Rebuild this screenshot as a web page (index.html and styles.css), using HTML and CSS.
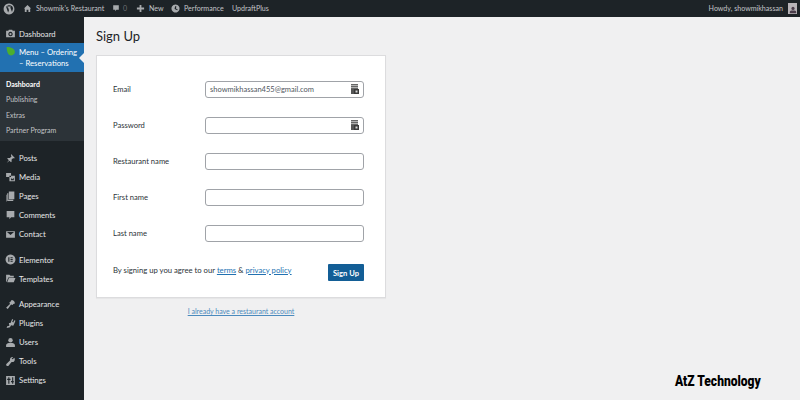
FILE: index.html
```html
<!DOCTYPE html>
<html lang="en">
<head>
<meta charset="utf-8">
<title>Sign Up</title>
<link rel="stylesheet" href="styles.css">
</head>
<body>
<svg width="0" height="0" class="defs">
  <symbol id="i-dash" viewBox="0 0 20 20"><path d="M2 5h4l1-2h6l1 2h4v12H2z M10 7a4 4 0 1 0 .01 0z" fill-rule="evenodd"/><circle cx="10" cy="11" r="2"/></symbol>
  <symbol id="i-pin" viewBox="0 0 20 20"><path d="M11 2l7 7-2 1-1-1-3 3 0 4-1 1-3-3-5 4 4-5-3-3 1-1 4 0 3-3-1-1z"/></symbol>
  <symbol id="i-media" viewBox="0 0 20 20"><path d="M2 2h9v7H2z M8 7h10v10H8z M11 11l2 2 3-2v4h-5z" fill-rule="evenodd"/></symbol>
  <symbol id="i-pages" viewBox="0 0 20 20"><path d="M7 1h10v14H7z M4 4h2v12h9v2H4z M2 7h1v12h9v0H2z"/></symbol>
  <symbol id="i-comment" viewBox="0 0 20 20"><path d="M3 2h14v11h-6l-3 4v-4H3z"/></symbol>
  <symbol id="i-mail" viewBox="0 0 20 20"><path d="M2 4h16v12H2z M4 6l6 5 6-5v-.5H4z" fill-rule="evenodd"/></symbol>
  <symbol id="i-el" viewBox="0 0 20 20"><path d="M10 1a9 9 0 1 0 .01 0z M6 6v8h2V6z M10 6v1.600h4V6z M10 9.200v1.600h4V9.200z M10 12.400V14h4v-1.600z" fill-rule="evenodd"/></symbol>
  <symbol id="i-folder" viewBox="0 0 20 20"><path d="M2 3h6l2 2h6v3H6l-3 8H2z M7 9h12l-3 8H4z"/></symbol>
  <symbol id="i-brush" viewBox="0 0 20 20"><path d="M12 2c3 0 6 3 6 6l-3 1-1 2-3-1-6 8-3-2 7-7-1-3 2-1z"/></symbol>
  <symbol id="i-plug" viewBox="0 0 20 20"><path d="M13 2l2 1-2 4 2 1 2-4 2 1-2 5-2 4-4-1-2 4-6 1 1-3 4-1-1-5 3 0z"/></symbol>
  <symbol id="i-user" viewBox="0 0 20 20"><circle cx="10" cy="6" r="4"/><path d="M2 18v-3c0-3 3-4 8-4s8 1 8 4v3z"/></symbol>
  <symbol id="i-wrench" viewBox="0 0 20 20"><path d="M17 3l-3 3-2-1 3-3c-3-1-6 1-6 4v2L2 15l1 3 3 0 6-7h2c3 0 5-4 3-8z"/></symbol>
  <symbol id="i-set" viewBox="0 0 20 20"><path d="M2 2h16v16H2z M6 4v3H4v2h2v7h2V9h2V7H8V4z M13 4v7h-2v2h2v3h2v-3h1v-2h-1V4z" fill-rule="evenodd"/></symbol>
  <symbol id="i-wp" viewBox="0 0 20 20"><path d="M10 1a9 9 0 1 0 .01 0z M5 6l3.500 10L10 12 8.500 7.500 7.800 7h-.8V6h6v1h-1l3 8 1.500-5c.4-2-.5-3-1-4-2-3-7.500-3.500-9.500 0z" fill-rule="evenodd"/></symbol>
  <symbol id="i-home" viewBox="0 0 20 20"><path d="M10 2l8 8h-2v8h-4v-5H8v5H4v-8H2z"/></symbol>
  <symbol id="i-plus" viewBox="0 0 20 20"><path d="M8 2h4v6h6v4h-6v6H8v-6H2V8h6z"/></symbol>
  <symbol id="i-perf" viewBox="0 0 20 20"><path d="M10 1a9 9 0 1 0 .01 0z M9 5l-1 6 6 3 1-2-4-2 1-5z" fill-rule="evenodd"/></symbol>
  <symbol id="i-fill" viewBox="0 0 8 10"><path d="M0 0h7v1.200H0z M0 1.800h7V3H0z M0 3.600h7V5H0z" fill="#666"/><path d="M0 5h3v5H0z" fill="#555"/><path d="M3 5h5v5H3z" fill="#3a3a3a"/><path d="M4.500 6.500h2v2h-2z" fill="#d8d8d8"/></symbol>
</svg>

<header class="topbar">
  <div class="topbar-group">
    <svg class="bar-icon wp"><use href="#i-wp"/></svg>
    <svg class="bar-icon home"><use href="#i-home"/></svg>
    <span class="bar-text site">Showmik's Restaurant</span>
    <svg class="bar-icon comment"><use href="#i-comment"/></svg>
    <span class="bar-text zero">0</span>
    <svg class="bar-icon plus"><use href="#i-plus"/></svg>
    <span class="bar-text new">New</span>
    <svg class="bar-icon perf"><use href="#i-perf"/></svg>
    <span class="bar-text perf-t">Performance</span>
    <span class="bar-text">UpdraftPlus</span>
  </div>
  <div class="topbar-group howdy">
    <span class="bar-text">Howdy, showmikhassan</span>
    <span class="avatar"><svg class="avatar-icon"><use href="#i-user"/></svg></span>
  </div>
</header>

<div class="layout">
  <nav class="sidebar">
    <a class="item"><svg class="mi"><use href="#i-dash"/></svg>Dashboard</a>
    <a class="item current">
      <svg class="mi leaf" viewBox="0 0 20 20"><path d="M3 2c8 0 15 3 15 9 0 5-6 7-9 6C5 16 3 8 3 2z"/></svg>
      <span>Menu – Ordering<br>– Reservations</span>
    </a>
    <div class="sub">
      <a class="sub-item strong">Dashboard</a>
      <a class="sub-item">Publishing</a>
      <a class="sub-item">Extras</a>
      <a class="sub-item">Partner Program</a>
    </div>
    <div class="group first">
      <a class="item"><svg class="mi"><use href="#i-pin"/></svg>Posts</a>
      <a class="item"><svg class="mi"><use href="#i-media"/></svg>Media</a>
      <a class="item"><svg class="mi"><use href="#i-pages"/></svg>Pages</a>
      <a class="item"><svg class="mi"><use href="#i-comment"/></svg>Comments</a>
      <a class="item"><svg class="mi"><use href="#i-mail"/></svg>Contact</a>
    </div>
    <div class="group">
      <a class="item"><svg class="mi"><use href="#i-el"/></svg>Elementor</a>
      <a class="item"><svg class="mi"><use href="#i-folder"/></svg>Templates</a>
    </div>
    <div class="group">
      <a class="item"><svg class="mi"><use href="#i-brush"/></svg>Appearance</a>
      <a class="item"><svg class="mi"><use href="#i-plug"/></svg>Plugins</a>
      <a class="item"><svg class="mi"><use href="#i-user"/></svg>Users</a>
      <a class="item"><svg class="mi"><use href="#i-wrench"/></svg>Tools</a>
      <a class="item"><svg class="mi"><use href="#i-set"/></svg>Settings</a>
    </div>
  </nav>

  <main class="main">
    <h1 class="title">Sign Up</h1>
    <form class="card">
      <div class="row"><label class="label">Email</label><div class="field"><span class="value">showmikhassan455@gmail.com</span><svg class="fill"><use href="#i-fill"/></svg></div></div>
      <div class="row"><label class="label">Password</label><div class="field"><svg class="fill"><use href="#i-fill"/></svg></div></div>
      <div class="row"><label class="label">Restaurant name</label><div class="field"></div></div>
      <div class="row"><label class="label">First name</label><div class="field"></div></div>
      <div class="row"><label class="label">Last name</label><div class="field"></div></div>
      <div class="foot">
        <p class="agree">By signing up you agree to our <a class="link">terms</a> &amp; <a class="link">privacy policy</a></p>
        <span class="btn">Sign Up</span>
      </div>
    </form>
    <a class="have">I already have a restaurant account</a>
  </main>
</div>
<div class="watermark">AtZ Technology</div>
</body>
</html>
```

FILE: styles.css
```css
* { box-sizing: border-box; }
html, body { margin: 0; height: 400px; overflow: hidden; }
body { background: #f0f0f1; font-family: "Lato", "Liberation Sans", sans-serif; font-size: 7.600px; color: #2c3338; }
.defs { position: absolute; }

.topbar { height: 17px; background: #1d2327; color: #c3c4c7; display: flex; justify-content: space-between; align-items: center; padding: 0 3px; }
.topbar-group { display: flex; align-items: center; }
.bar-icon { width: 9px; height: 9px; fill: #a7aaad; flex: none; }
.bar-icon.wp { width: 12px; height: 12px; margin-right: 8px; }
.bar-icon.home { margin-right: 4px; }
.bar-text { font-size: 7.100px; line-height: 17px; white-space: nowrap; }
.site { width: 76px; }
.zero { width: 16px; padding-left: 3px; color: #6c7074; }
.new { width: 26px; padding-left: 4px; }
.perf-t { width: 52px; padding-left: 4px; }
.bar-icon.comment { width: 8px; height: 9px; }
.howdy { gap: 5px; }
.avatar { width: 9px; height: 11px; background: #b8b4b8; display: flex; align-items: flex-end; justify-content: center; }
.avatar-icon { width: 8px; height: 8px; fill: #4a3c4a; }

.layout { display: flex; height: 383px; }
.sidebar { width: 84px; flex: none; background: #1d2327; padding-top: 7px; color: #f0f0f1; }
.item { display: flex; align-items: center; height: 19px; padding-left: 5px; font-size: 7.700px; color: #e6e7e8; }
.mi { width: 11px; height: 11px; margin-right: 3px; fill: #a7aaad; flex: none; }
.item.current { height: 29px; background: #2271b1; color: #fff; line-height: 10.500px; position: relative; }
.item.current::after { content: ""; position: absolute; right: 0; top: 10px; border: 5px solid transparent; border-right-color: #f0f0f1; border-left-width: 0; }
.leaf { fill: #4caf2e; align-self: flex-start; margin-top: 3px; }
.sub { background: #2c3338; padding: 4px 0; height: 69px; }
.sub-item { display: flex; align-items: center; height: 15.500px; padding-left: 6px; font-size: 7px; color: #c3c4c7; }
.sub-item.strong { color: #fff; font-weight: 700; }
.group { padding-top: 6.500px; }
.group.first { padding-top: 7.500px; }

.main { flex: 1; padding-left: 12px; }
.title { margin: 0; font-size: 13px; font-weight: 400; line-height: 38px; height: 38px; color: #1d2327; }
.card { width: 290px; height: 243px; background: #fff; border: 1px solid #dcdcde; box-shadow: 0 1px 1px rgba(0,0,0,.04); padding: 15px 21px 0 16px; }
.row { display: flex; align-items: center; height: 36px; }
.label { width: 92px; flex: none; font-size: 7.600px; color: #2c3338; }
.field { flex: 1; height: 17px; border: 1px solid #a0a3a8; border-radius: 3px; background: #fff; display: flex; align-items: center; justify-content: space-between; padding: 0 4px; }
.value { font-size: 7.500px; color: #50575e; }
.fill { width: 8px; height: 10px; margin-left: auto; }
.foot { display: flex; justify-content: space-between; align-items: center; margin-top: 5px; padding-top: 8px; }
.agree { margin: 0; font-size: 7.700px; color: #2c3338; position: relative; top: -3px; }
.link { color: #2271b1; text-decoration: underline; }
.btn { width: 36px; height: 17px; background: #135e96; border-radius: 1px; color: #fff; font-size: 7.600px; font-weight: 700; display: flex; align-items: center; justify-content: center; }
.have { display: block; width: 290px; margin-top: 9px; text-align: center; font-size: 7px; color: #2271b1; text-decoration: underline; opacity: .8; }

.watermark { position: absolute; left: 675px; top: 372px; font-family: "Roboto", "Liberation Sans", sans-serif; font-size: 14px; font-weight: 900; color: #000; line-height: 18px; white-space: nowrap; transform: scaleX(.86); transform-origin: left center; }
```
